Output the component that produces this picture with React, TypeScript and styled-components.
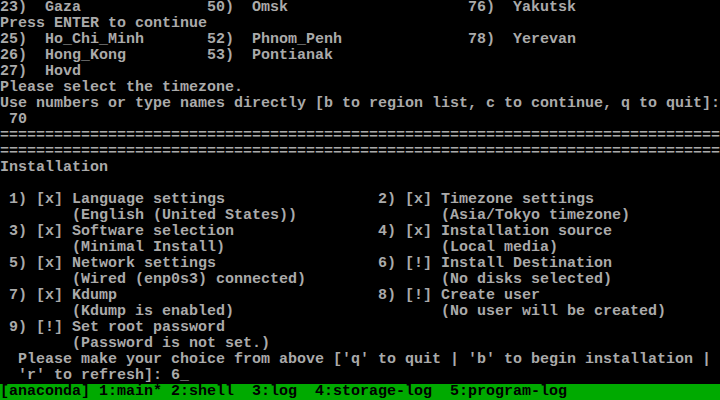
import React from "react";
import styled, { createGlobalStyle } from "styled-components";

const Global = createGlobalStyle`
  html, body { margin: 0; padding: 0; background: #000; }
  #root { width: 720px; height: 400px; overflow: hidden; }
`;

const Screen = styled.div`
  width: 720px;
  height: 400px;
  background: #000;
  color: #aaaaaa;
  font-family: "Liberation Mono", "DejaVu Sans Mono", monospace;
  font-size: 15px;
  font-weight: bold;
  line-height: 16px;
  display: flex;
  flex-direction: column;
`;

const Line = styled.div<{ $indent?: number }>`
  height: 16px;
  white-space: pre;
  padding-left: ${(p) => (p.$indent ?? 0) * 9}px;
`;

const TzRow = styled.div`
  display: grid;
  grid-template-columns: 207px 261px 1fr;
  height: 16px;
  white-space: pre;
`;

const ChoiceGrid = styled.div`
  display: grid;
  grid-template-columns: 369px 1fr;
  padding-left: 9px;
`;

const Choice = styled.div`
  display: flex;
  flex-direction: column;
  white-space: pre;
`;

const Cursor = styled.span`
  display: inline-block;
`;

const StatusBar = styled.div`
  height: 16px;
  background: #00aa00;
  color: #000;
  white-space: pre;
`;

const tz: [string, string, string][] = [
  ["23)  Gaza", "50)  Omsk", "76)  Yakutsk"],
  ["25)  Ho_Chi_Minh", "52)  Phnom_Penh", "78)  Yerevan"],
  ["26)  Hong_Kong", "53)  Pontianak", ""],
  ["27)  Hovd", "", ""],
];

const choices: [string, string][] = [
  ["1) [x] Language settings", "(English (United States))"],
  ["2) [x] Timezone settings", "(Asia/Tokyo timezone)"],
  ["3) [x] Software selection", "(Minimal Install)"],
  ["4) [x] Installation source", "(Local media)"],
  ["5) [x] Network settings", "(Wired (enp0s3) connected)"],
  ["6) [!] Install Destination", "(No disks selected)"],
  ["7) [x] Kdump", "(Kdump is enabled)"],
  ["8) [!] Create user", "(No user will be created)"],
  ["9) [!] Set root password", "(Password is not set.)"],
];

const TzLine = ({ cells }: { cells: [string, string, string] }) => (
  <TzRow>
    <span>{cells[0]}</span>
    <span>{cells[1]}</span>
    <span>{cells[2]}</span>
  </TzRow>
);

export default function App() {
  const eq = "=".repeat(80);
  return (
    <>
      <Global />
      <Screen>
        <TzLine cells={tz[0]} />
        <Line>Press ENTER to continue</Line>
        <TzLine cells={tz[1]} />
        <TzLine cells={tz[2]} />
        <TzLine cells={tz[3]} />
        <Line>Please select the timezone.</Line>
        <Line>Use numbers or type names directly [b to region list, c to continue, q to quit]:</Line>
        <Line $indent={1}>70</Line>
        <Line>{eq}</Line>
        <Line>{eq}</Line>
        <Line>Installation</Line>
        <Line />
        <ChoiceGrid>
          {choices.map(([title, sub]) => (
            <Choice key={title}>
              <Line>{title}</Line>
              <Line $indent={7}>{sub}</Line>
            </Choice>
          ))}
        </ChoiceGrid>
        <Line $indent={2}>Please make your choice from above ['q' to quit | 'b' to begin installation |</Line>
        <Line $indent={2}>
          'r' to refresh]: 6<Cursor>_</Cursor>
        </Line>
        <StatusBar>[anaconda] 1:main* 2:shell  3:log  4:storage-log  5:program-log</StatusBar>
      </Screen>
    </>
  );
}
